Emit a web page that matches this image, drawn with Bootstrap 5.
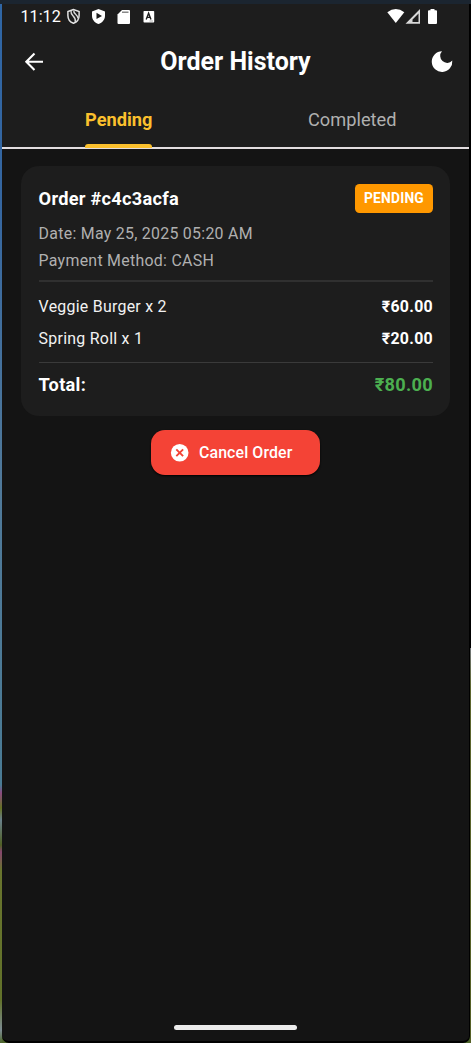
<!DOCTYPE html>
<html lang="en" data-bs-theme="dark">
<head>
<meta charset="utf-8">
<meta name="viewport" content="width=device-width, initial-scale=1">
<title>Order History</title>
<link rel="stylesheet" href="https://cdn.jsdelivr.net/npm/bootstrap@5.3.0/dist/css/bootstrap.min.css">
<style>
html,body{height:100%}
body{font-family:Roboto,"Noto Sans",sans-serif;color:#fff;overflow:hidden;padding:4px 1px 0 2px;
background:linear-gradient(#1b2530,#1b2530) 0 0/100% 4px no-repeat,
linear-gradient(#000,#000) 100% 4px/1px 644px no-repeat,
linear-gradient(#73777a,#5d662f 40px,#566128) 100% 648px/1px 395px no-repeat,
linear-gradient(#2f66a5 0,#3566a0 200px,#50799a 480px,#4a7b94 785px,#8c4a80 793px,#667224 808px,#69808a 820px,#506024 845px,#87466e 852px,#69752e 870px,#62722a 1000px,#7d8c91 1030px,#4d652c 1043px) 0 0/2px 100% no-repeat #4d652c}
.screen{height:1039px;background:#141414;border-right:1px solid #000;border-bottom:2px solid #000;border-radius:0 0 7px 7px;overflow:hidden}
.topbar{background:#1d1d1d;height:145px;border-bottom:2px solid #e2dde0}
.status{height:30px;padding:0 31px 0 18.5px}
.clock{font-size:16.2px;line-height:25px;width:41px;margin-right:3.5px}
.status svg,.title-row svg,.cancel svg{display:block;flex:none}
.title-row{height:56px;padding:0 15px 0 20px}
.title-row h1{font-size:25px;line-height:30px;font-weight:700;margin:0 5px 0 0}
.tabs{height:57px}
.tab-link{font-size:18.2px;line-height:22px;color:#b0b0b0;padding-top:19px;letter-spacing:.05px;text-decoration:none}
.tab-link.active{color:#fbc02d;font-weight:700;letter-spacing:0}
.tab-link.active span{display:block;position:relative}
.tab-link.active span::after{content:"";position:absolute;left:0;right:0;top:35px;height:4px;background:#fbc02d;border-radius:3px 3px 0 0}
.order{margin:17px 19px 0;height:250px;background:#1d1d1d;border:0;border-radius:18px;padding:18px 17px 0 17.6px}
.order-id{font-size:18.2px;line-height:29px;font-weight:700;letter-spacing:.28px}
.pill{background:#ff9800;border-radius:4.5px;height:29px;width:78px;font-size:13.8px;line-height:29.5px;font-weight:700;letter-spacing:.2px;text-align:center}
.meta{font-size:15.9px;line-height:27px;color:#b0b0b0;letter-spacing:.28px}
.meta-block{margin-top:7px}
.rule{height:1px;background:#3a3a3a;margin:7px 0 10px}
.rule-soft{height:2px;background:#303030;margin:6px 0 9px}
.item{font-size:15.9px;line-height:32px;letter-spacing:.27px;color:#f2f2f2}
.item b{font-weight:700;color:#fff;letter-spacing:.3px}
.total{font-size:18.2px;line-height:26px;font-weight:700;letter-spacing:.28px;margin-top:-1px}
.total .sum{color:#4caf50}
.cancel{width:169px;height:45px;margin:14px auto 0 149px;background:#f44336!important;color:#fff!important;border:0;border-radius:14px;box-shadow:0 1px 2px #000;font-size:15.9px;font-weight:500;letter-spacing:.11px;padding:0 0 0 19px;gap:9px}
.home{width:123px;height:5px;background:#ececec;border-radius:3px;margin:0 0 11px 172px}
</style>
</head>
<body>
<div class="screen d-flex flex-column">
<header class="topbar flex-shrink-0">
<div class="status d-flex">
<span class="clock text-nowrap">11:12</span>
<svg width="90" height="26" viewBox="65 4 90 26">
<path d="M73.5 9.500 67.900 11.600V15.500c0 3.700 2.300 6.600 5.600 7.800 3.300-1.200 5.600-4.100 5.600-7.800v-3.900z" fill="none" stroke="#e2e2e2" stroke-width="1.500"/>
<path d="M71 10.800c-.8 5.600 5.600 5 4.300 11.500M73.800 10.500c-.6 3.600 3.600 3.700 4.300 7.800" fill="none" stroke="#d8d8d8" stroke-width="1.400"/>
<path fill="#fff" fill-rule="evenodd" d="M98.500 9l6.500 2.600v4.100c0 3.800-2.700 7.100-6.500 8.300-3.800-1.200-6.500-4.500-6.500-8.300v-4.100zM96.500 12.700v6.400l5.500-3.200z"/>
<path fill="#fff" d="M122 10h7q1 0 1 1v12q0 1-1 1h-10.500q-1 0-1-1v-8.500z"/>
<path fill="#888" d="M122 11.500h6.500v1.500h-6.500z"/>
<rect x="143.500" y="11" width="10.700" height="11.500" rx=".7" fill="#fff"/>
<path d="M146.200 19.500 148.600 13.200 151 19.500M147 17.400h3.200" fill="none" stroke="#1d1d1d" stroke-width="1.400"/><path d="M149.500 21h3.500" stroke="#999" stroke-width=".8"/>
</svg>
<svg width="52" height="26" viewBox="386 4 52 26" class="ms-auto">
<path fill="#fff" d="M387.300 12.300q8.500-6.600 17 0L395.800 23z"/>
<path fill="#d8d8d8" fill-rule="evenodd" d="M405.500 23.700 420 9v14.700zM412.500 21.900h6v-8.500l-6 6z"/>
<path fill="#fff" d="M430.500 9h4v1.300h1.500q1 0 1 1V23q0 1-1 1h-7q-1 0-1-1V11.300q0-1 1-1h1.500z"/>
</svg>
</div>
<div class="title-row d-flex align-items-center justify-content-between">
<svg width="24" height="24" viewBox="22 50 24 24"><path d="M43 61.700H26.500M34.500 53.400 26.300 61.700l8.200 8.300" fill="none" stroke="#fff" stroke-width="2.100"/></svg>
<h1>Order History</h1>
<svg width="24" height="24" viewBox="430 50 24 24"><path fill="#fff" d="M442 51.300a10.300 10.300 0 1 0 10.300 9.300 6.300 6.300 0 0 1-10.300-9.300z"/></svg>
</div>
<nav class="tabs row g-0">
<a class="tab-link active col-6 d-flex justify-content-center"><span>Pending</span></a>
<a class="tab-link col-6 text-center">Completed</a>
</nav>
</header>
<main class="flex-grow-1">
<section class="card order">
<div class="d-flex justify-content-between"><span class="order-id">Order #c4c3acfa</span><span class="pill">PENDING</span></div>
<div class="meta meta-block">Date: May 25, 2025 05:20 AM</div>
<div class="meta">Payment Method: CASH</div>
<div class="rule rule-soft"></div>
<div class="item d-flex justify-content-between"><span>Veggie Burger x 2</span><b>₹60.00</b></div>
<div class="item d-flex justify-content-between"><span>Spring Roll x 1</span><b>₹20.00</b></div>
<div class="rule"></div>
<div class="total d-flex justify-content-between"><span>Total:</span><span class="sum">₹80.00</span></div>
</section>
<button class="btn cancel d-flex align-items-center">
<svg width="20" height="20" viewBox="0 0 20 20"><circle cx="9.700" cy="9.700" r="8.800" fill="#fff"/><path d="m6.300 6.300 6.800 6.800m0-6.800-6.800 6.800" stroke="#f44336" stroke-width="1.900"/></svg>
<span>Cancel Order</span></button>
</main>
<div class="home"></div>
</div>
<script src="https://cdn.jsdelivr.net/npm/bootstrap@5.3.0/dist/js/bootstrap.bundle.min.js"></script>
</body>
</html>
